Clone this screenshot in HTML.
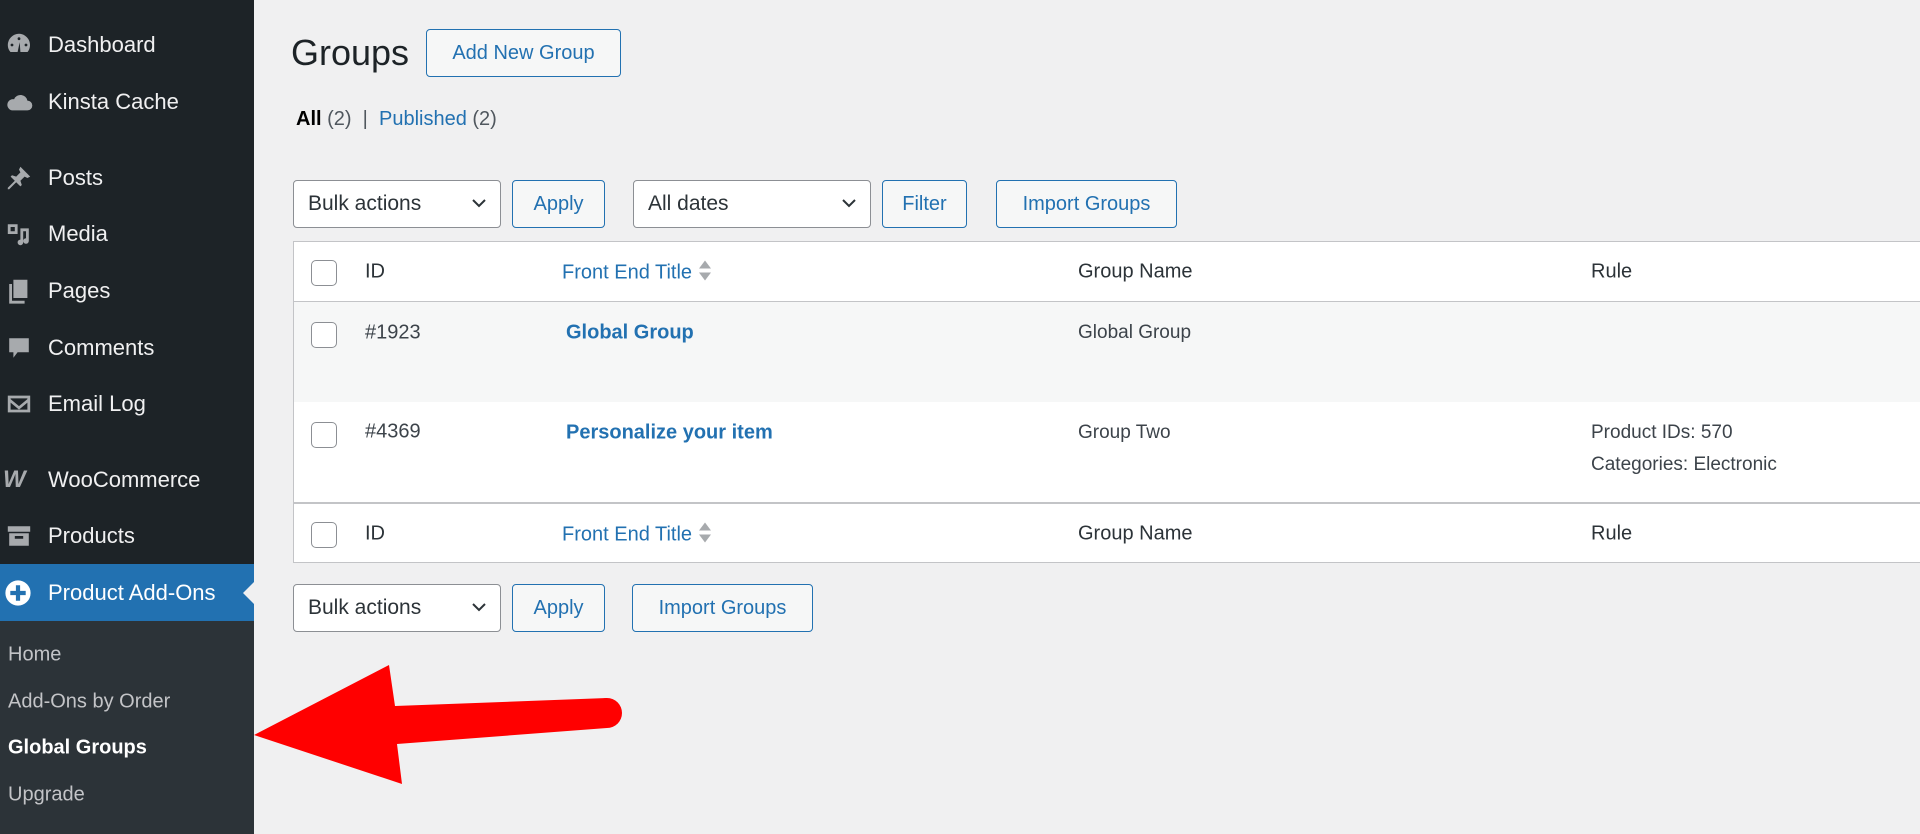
<!DOCTYPE html>
<html><head><meta charset="utf-8"><style>
*{margin:0;padding:0;box-sizing:border-box}
body{width:1920px;height:834px;overflow:hidden;background:#f0f0f1;font-family:"Liberation Sans",sans-serif;color:#3c434a;position:relative}
.a{position:absolute;white-space:nowrap}
#sb{position:absolute;left:0;top:0;width:254px;height:834px;background:#1d2327}
.mi{position:absolute;left:48px;color:#f0f0f1;font-size:22px;transform:translateY(-50%)}
.ic{position:absolute;left:5px;width:28px;height:28px;transform:translateY(-50%);fill:#a7aaad}
.sub{position:absolute;left:0;top:621px;width:254px;height:213px;background:#2c3338}
.si{position:absolute;left:8px;font-size:20px;color:#c3c4c7;transform:translateY(-50%)}
.btn{position:absolute;border:1.5px solid #2271b1;border-radius:4px;background:#f6f7f7;color:#2271b1;font-size:20px;display:flex;align-items:center;justify-content:center}
.sel{position:absolute;border:1.5px solid #8c8f94;border-radius:4px;background:#fff;color:#2c3338;font-size:21px;display:flex;align-items:center;padding-left:14px}
.sel svg{position:absolute;right:14px;top:50%;margin-top:-6px}
.cb{position:absolute;left:311px;width:26px;height:26px;border:1.5px solid #8c8f94;border-radius:5px;background:#fff;transform:translateY(-50%)}
.t{position:absolute;font-size:20px;transform:translateY(-50%);white-space:nowrap}
.lk{color:#2271b1}
.b{font-weight:bold}
.srt{display:inline-block;vertical-align:-3px;margin-left:6px}
</style></head><body>
<div id="sb">
<svg class="ic" style="top:45px" viewBox="0 0 20 20"><path d="M10 2a8 8 0 0 0-8 8c0 2 .7 3.7 1.9 5h12.2A8 8 0 0 0 10 2zm0 2.5a1 1 0 1 1 0 2 1 1 0 0 1 0-2zM5 9a1 1 0 1 1 0 2 1 1 0 0 1 0-2zm10 0a1 1 0 1 1 0 2 1 1 0 0 1 0-2zm-4 6H9l1.5-7z"/></svg>
<div class="mi" style="top:45px">Dashboard</div>
<svg class="ic" style="top:102px" viewBox="0 0 20 20"><path d="M5 16h11a3.5 3.5 0 0 0 0-7 5 5 0 0 0-9.5-1A4 4 0 0 0 5 16z"/></svg>
<div class="mi" style="top:102px">Kinsta Cache</div>
<svg class="ic" style="top:178px" viewBox="0 0 20 20"><path d="M11 2l7 7-2 1-2-1-3 3 1 3-1 1-3-3-5 5-1 0 0-1 5-5-3-3 1-1 3 1 3-3-1-2z"/></svg>
<div class="mi" style="top:178px">Posts</div>
<svg class="ic" style="top:234px" viewBox="0 0 20 20"><path d="M2 3h7v7H2zM4 5v3h3V5zM11 6h6v9a2 2 0 1 1-2-2V8h-2v8a2 2 0 1 1-2-2z"/></svg>
<div class="mi" style="top:234px">Media</div>
<svg class="ic" style="top:291px" viewBox="0 0 20 20"><path d="M6 2h10v13H6zM3 5h2v12h9v2H3z"/></svg>
<div class="mi" style="top:291px">Pages</div>
<svg class="ic" style="top:348px" viewBox="0 0 20 20"><path d="M3 3h14v10h-8l-3 4v-4H3z"/></svg>
<div class="mi" style="top:348px">Comments</div>
<svg class="ic" style="top:404px" viewBox="0 0 20 20"><path d="M2 4h16v12H2zm2 2v.5l6 5 6-5V6zm0 3v5h12V9l-6 5z"/></svg>
<div class="mi" style="top:404px">Email Log</div>
<div class="a" style="left:3px;top:466px;color:#a7aaad;font-size:24px;font-weight:bold;font-style:italic;letter-spacing:-3px">W</div>
<div class="mi" style="top:480px">WooCommerce</div>
<svg class="ic" style="top:536px" viewBox="0 0 20 20"><path d="M2 3h16v4H2zM3 8h14v9H3zm4 2v2h6v-2z"/></svg>
<div class="mi" style="top:536px">Products</div>
<div class="a" style="left:0;top:564px;width:254px;height:57px;background:#2271b1"></div>
<div class="a" style="left:243px;top:582px;width:0;height:0;border-top:11px solid transparent;border-bottom:11px solid transparent;border-right:11px solid #f0f0f1"></div>
<svg class="ic" style="top:593px;left:4px;fill:#fff" viewBox="0 0 20 20"><circle cx="10" cy="10" r="9"/><path d="M8.5 4.5h3v4h4v3h-4v4h-3v-4h-4v-3h4z" fill="#2271b1"/></svg>
<div class="mi" style="top:593px;color:#fff">Product Add-Ons</div>
<div class="sub"></div>
<div class="si" style="top:655px">Home</div>
<div class="si" style="top:702px">Add-Ons by Order</div>
<div class="si b" style="top:748px;color:#fff">Global Groups</div>
<div class="si" style="top:795px">Upgrade</div>
</div>

<div class="a" style="left:291px;top:32px;font-size:36px;color:#1d2327">Groups</div>
<div class="btn" style="left:426px;top:29px;width:195px;height:48px">Add New Group</div>
<div class="a" style="left:296px;top:108px;font-size:20px;color:#50575e"><span class="b" style="color:#000">All</span> (2) &nbsp;| &nbsp;<span class="lk">Published</span> (2)</div>

<div class="sel" style="left:293px;top:180px;width:208px;height:48px">Bulk actions<svg width="14" height="10" viewBox="0 0 14 10"><path d="M1 2l6 6 6-6" stroke="#2c3338" stroke-width="2" fill="none"/></svg></div>
<div class="btn" style="left:512px;top:180px;width:93px;height:48px">Apply</div>
<div class="sel" style="left:633px;top:180px;width:238px;height:48px">All dates<svg width="14" height="10" viewBox="0 0 14 10"><path d="M1 2l6 6 6-6" stroke="#2c3338" stroke-width="2" fill="none"/></svg></div>
<div class="btn" style="left:882px;top:180px;width:85px;height:48px">Filter</div>
<div class="btn" style="left:996px;top:180px;width:181px;height:48px">Import Groups</div>

<div class="a" style="left:293px;top:241px;width:1640px;height:322px;background:#fff;border:1.5px solid #c3c4c7"></div>
<div class="a" style="left:294px;top:301px;width:1630px;height:101px;background:#f6f7f7;border-top:1.5px solid #c3c4c7"></div>
<div class="a" style="left:294px;top:502px;width:1630px;height:1.5px;background:#c3c4c7"></div>

<div class="cb" style="top:273px"></div>
<div class="t" style="left:365px;top:272px;color:#2c3338">ID</div>
<div class="t lk" style="left:562px;top:272px">Front End Title<svg class="srt" width="14" height="22" viewBox="0 0 14 22"><path d="M7 1l6 8H1zM7 21l6-8H1z" fill="#a7aaad"/></svg></div>
<div class="t" style="left:1078px;top:272px;color:#2c3338">Group Name</div>
<div class="t" style="left:1591px;top:272px;color:#2c3338">Rule</div>

<div class="cb" style="top:335px"></div>
<div class="t" style="left:365px;top:333px">#1923</div>
<div class="t lk b" style="left:566px;top:333px">Global Group</div>
<div class="t" style="left:1078px;top:333px;font-size:19px">Global Group</div>

<div class="cb" style="top:435px"></div>
<div class="t" style="left:365px;top:432px">#4369</div>
<div class="t lk b" style="left:566px;top:433px">Personalize your item</div>
<div class="t" style="left:1078px;top:433px;font-size:19px">Group Two</div>
<div class="t" style="left:1591px;top:433px;font-size:19px">Product IDs: 570</div>
<div class="t" style="left:1591px;top:465px;font-size:19px">Categories: Electronic</div>

<div class="cb" style="top:535px"></div>
<div class="t" style="left:365px;top:534px;color:#2c3338">ID</div>
<div class="t lk" style="left:562px;top:534px">Front End Title<svg class="srt" width="14" height="22" viewBox="0 0 14 22"><path d="M7 1l6 8H1zM7 21l6-8H1z" fill="#a7aaad"/></svg></div>
<div class="t" style="left:1078px;top:534px;color:#2c3338">Group Name</div>
<div class="t" style="left:1591px;top:534px;color:#2c3338">Rule</div>

<div class="sel" style="left:293px;top:584px;width:208px;height:48px">Bulk actions<svg width="14" height="10" viewBox="0 0 14 10"><path d="M1 2l6 6 6-6" stroke="#2c3338" stroke-width="2" fill="none"/></svg></div>
<div class="btn" style="left:512px;top:584px;width:93px;height:48px">Apply</div>
<div class="btn" style="left:632px;top:584px;width:181px;height:48px">Import Groups</div>

<svg class="a" style="left:0;top:0" width="1920" height="834" viewBox="0 0 1920 834">
<polygon points="254,735 389,665 395,706 607,698 607,728 397,744 402,784" fill="#ff0000"/>
<circle cx="607" cy="713" r="15" fill="#ff0000"/>
</svg>
</body></html>
